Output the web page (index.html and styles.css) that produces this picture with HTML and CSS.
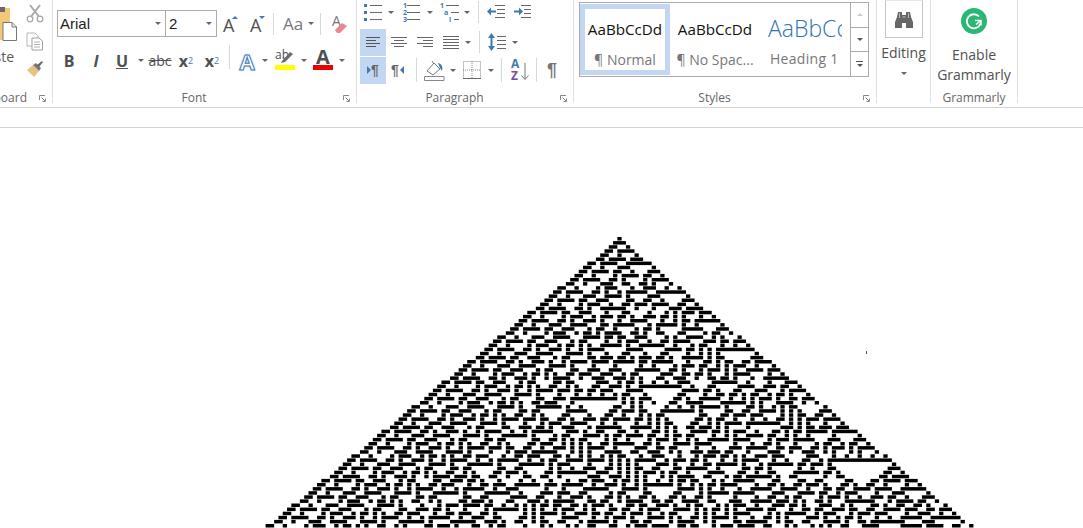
FILE: index.html
```html
<!DOCTYPE html>
<html lang="en">
<head>
<meta charset="utf-8">
<title>Document - Word</title>
<link rel="stylesheet" href="styles.css">
</head>
<body>
<div class="ribbon">
  <section class="group g-clip">
    <div class="body clip-body">
      <div class="paste">
        <svg class="paste-icon" width="18" height="42" viewBox="0 0 18 42"><rect x="-4" y="8" width="14" height="32" fill="#f0c878"/><rect x="-2" y="7" width="7" height="5" fill="#6a6a6a"/><path d="M3 22.5h9l4.500 4.500v13.500h-13.500z" fill="#fff" stroke="#777"/><path d="M12 22.500v4.500h4.500" fill="none" stroke="#777"/></svg>
        <span class="paste-text">Paste</span>
      </div>
      <div class="clip-tools">
        <svg width="18" height="19" viewBox="0 0 18 19"><path d="M4 1l8.500 11M14 1l-8.500 11" stroke="#a9a9a9" stroke-width="2" fill="none"/><circle cx="4" cy="15" r="2.800" fill="none" stroke="#a9a9a9" stroke-width="1.300"/><circle cx="14" cy="15" r="2.800" fill="none" stroke="#a9a9a9" stroke-width="1.300"/></svg>
        <svg width="18" height="19" viewBox="0 0 18 19"><path d="M1 1h8l3 3v10h-11z" fill="#fff" stroke="#b5b5b5"/><path d="M6 6h7l3.500 3v9h-10.500z" fill="#fff" stroke="#a0a0a0"/><path d="M8 10h6M8 12.500h6M8 15h6" stroke="#b0b0b0"/></svg>
        <svg width="18" height="18" viewBox="0 0 18 18"><path d="M1 10l6-5 6 6-5 6z" fill="#e9c283"/><path d="M7 5l3-2 5 5-2 3z" fill="#777"/><path d="M11 5l5-4 1 1-4 5z" fill="#666"/></svg>
      </div>
    </div>
    <div class="label label-clip"><span class="label-text">Clipboard</span><svg class="launcher" width="7" height="7" viewBox="0 0 7 7"><path d="M.5 5V.5H6M2.500 2.500L6 6M3.500 6.500H6.500V3.500" fill="none" stroke="#888"/></svg></div>
  </section>

  <section class="group g-font">
    <div class="body font-body">
      <div class="row font-row1">
        <div class="select sel-font"><span>Arial</span><i class="caret"></i></div>
        <div class="select sel-size"><span>2</span><i class="caret"></i></div>
        <div class="tbtn b-grow"><span class="big-a">A</span><svg width="6" height="4" class="tick" viewBox="0 0 6 4"><path d="M0 4l3-3 3 3z" fill="#3f78b5"/></svg></div>
        <div class="tbtn b-shrink"><span class="big-a">A</span><svg width="6" height="4" class="tick" viewBox="0 0 6 4"><path d="M0 1l3 3 3-3z" fill="#3f78b5"/></svg></div>
        <i class="sep sep-tall"></i>
        <div class="tbtn b-case"><span class="aa">Aa</span><i class="caret c-case"></i></div>
        <i class="sep sep-tall"></i>
        <div class="tbtn b-erase"><span class="erase-a">A</span><svg class="erase-svg" width="14" height="12" viewBox="0 0 14 12"><path d="M1 8l7-7 5 3-7 7H3z" fill="#ea8593"/></svg></div>
      </div>
      <div class="row font-row2">
        <div class="tbtn b-b">B</div>
        <div class="tbtn b-i">I</div>
        <div class="tbtn b-u">U</div><i class="caret c-u"></i>
        <div class="tbtn b-abc">abc</div>
        <div class="tbtn b-sub">x<sub>2</sub></div>
        <div class="tbtn b-sup">x<sup>2</sup></div>
        <i class="sep sep-r2"></i>
        <div class="tbtn b-glow">A</div><i class="caret c-glow"></i>
        <div class="tbtn b-hl"><span class="ab">ab</span><svg class="pen" width="14" height="14" viewBox="0 0 14 14"><path d="M2 11l8-9 3 2-8 8-4 1z" fill="#6a6a6a"/></svg><i class="bar bar-y"></i></div><i class="caret c-hl"></i>
        <div class="tbtn b-col"><span class="col-a">A</span><i class="bar bar-r"></i></div><i class="caret c-col"></i>
      </div>
    </div>
    <div class="label"><span class="label-text">Font</span><svg class="launcher" width="7" height="7" viewBox="0 0 7 7"><path d="M.5 5V.5H6M2.500 2.500L6 6M3.500 6.500H6.500V3.500" fill="none" stroke="#888"/></svg></div>
  </section>

  <section class="group g-para">
    <div class="body para-body">
      <div class="row para-row para-row1">
        <svg width="21" height="22" viewBox="0 0 21 22"><g fill="#3f78b5"><rect x="1" y="3" width="3" height="3"/><rect x="1" y="10" width="3" height="3"/><rect x="1" y="17" width="3" height="3"/></g><path d="M7 4.500h12M7 11.500h12M7 18.500h12" stroke="#666"/></svg>
        <i class="caret c-p1"></i>
        <svg class="i-num" width="20" height="22" viewBox="0 0 20 22"><g class="num"><text x="1" y="7">1</text><text x="1" y="14">2</text><text x="1" y="21">3</text></g><path d="M5 4.500h13M5 11.500h13M5 18.500h13" stroke="#666"/></svg>
        <i class="caret c-p2"></i>
        <svg class="i-ml" width="20" height="22" viewBox="0 0 20 22"><g class="num"><text x="0" y="7">1</text><text x="4" y="14">a</text><text x="9" y="21">i</text></g><path d="M6 4.500h13M11 11.500h8M14 18.500h5" stroke="#666"/></svg>
        <i class="caret c-p3"></i>
        <i class="sep sep-p1"></i>
        <svg class="i-dec" width="19" height="22" viewBox="0 0 19 22"><path d="M8 4.500h10M10 8.500h8M10 12.500h8M8 16.500h10" stroke="#666"/><path d="M0 10.500l4-4v3h5v2H4v3z" fill="#3f78b5"/></svg>
        <svg class="i-inc" width="19" height="22" viewBox="0 0 19 22"><path d="M8 4.500h10M11 8.500h7M11 12.500h7M8 16.500h10" stroke="#666"/><path d="M10 10.500l-4-4v3H1v2h5v3z" fill="#3f78b5"/></svg>
      </div>
      <div class="row para-row para-row2">
        <div class="pbtn on"><svg width="14" height="11" viewBox="0 0 14 11"><path d="M0 .5h14M0 3.500h10M0 6.500h14M0 9.500h10" stroke="#555"/></svg></div>
        <svg class="i-al" width="16" height="11" viewBox="0 0 16 11"><path d="M0 .5h16M3 3.500h10M0 6.500h16M3 9.500h10" stroke="#666"/></svg>
        <svg class="i-al" width="16" height="11" viewBox="0 0 16 11"><path d="M0 .5h16M6 3.500h10M0 6.500h16M6 9.500h10" stroke="#666"/></svg>
        <svg class="i-al" width="16" height="13" viewBox="0 0 16 13"><path d="M0 .5h16M0 3.500h16M0 6.500h16M0 9.500h16M0 12.500h16" stroke="#666"/></svg>
        <i class="caret c-p4"></i>
        <i class="sep sep-p2"></i>
        <svg class="i-ls" width="18" height="18" viewBox="0 0 18 18"><path d="M3.500 0L7 5H4.500v8H7l-3.500 5L0 13h2.500V5H0z" fill="#3f78b5"/><path d="M9 3.500h9M9 7.500h9M9 11.500h9M9 15.500h9" stroke="#666"/></svg>
        <i class="caret c-p5"></i>
      </div>
      <div class="row para-row para-row3">
        <div class="pbtn on pil"><svg width="4" height="8" viewBox="0 0 4 8"><path d="M0 0l4 4-4 4z" fill="#3f78b5"/></svg><span>¶</span></div>
        <div class="pil pil-r"><span>¶</span><svg width="5" height="8" viewBox="0 0 5 8"><path d="M5 0L1 4l4 4z" fill="#3f78b5"/></svg></div>
        <i class="sep sep-p3"></i>
        <svg class="i-shade" width="21" height="21" viewBox="0 0 21 21"><path d="M3 11l7-8 6 6-7 6z" fill="#fff" stroke="#777"/><path d="M8 1l2 3" stroke="#777"/><path d="M14 3c4 1 5 4 4 8l-2-3z" fill="#3f78b5"/><path d="M.5 16.500h19.500v4H.5z" fill="#fff" stroke="#888"/></svg>
        <i class="caret c-p6"></i>
        <svg class="i-bord" width="18" height="18" viewBox="0 0 18 18"><rect x=".5" y=".5" width="17" height="17" fill="none" stroke="#888" stroke-dasharray="1 1"/><path d="M9 0v18M0 9h18" stroke="#888" stroke-dasharray="1 1"/><path d="M0 17.500h18" stroke="#666"/></svg>
        <i class="caret c-p7"></i>
        <i class="sep sep-p4"></i>
        <div class="sort"><span class="sort-a">A</span><span class="sort-z">Z</span><svg class="sort-arrow" width="8" height="18" viewBox="0 0 8 18"><path d="M4 0v16M.5 12.500L4 16.500l3.500-4" fill="none" stroke="#777"/></svg></div>
        <i class="sep sep-p5"></i>
        <span class="pilcrow">¶</span>
      </div>
    </div>
    <div class="label"><span class="label-text">Paragraph</span><svg class="launcher" width="7" height="7" viewBox="0 0 7 7"><path d="M.5 5V.5H6M2.500 2.500L6 6M3.500 6.500H6.500V3.500" fill="none" stroke="#888"/></svg></div>
  </section>

  <section class="group g-styles">
    <div class="body styles-body">
      <div class="gallery">
        <div class="style-item selected"><span class="sample">AaBbCcDd</span><span class="style-name">¶ Normal</span></div>
        <div class="style-item"><span class="sample">AaBbCcDd</span><span class="style-name">¶ No Spac...</span></div>
        <div class="style-item heading"><span class="sample-h">AaBbCcDd</span><span class="style-name">Heading 1</span></div>
        <div class="scroller">
          <div class="sc"><i class="caret up"></i></div>
          <div class="sc"><i class="caret dark"></i></div>
          <div class="sc more"><b></b><i class="caret dark"></i></div>
        </div>
      </div>
    </div>
    <div class="label"><span class="label-text">Styles</span><svg class="launcher" width="7" height="7" viewBox="0 0 7 7"><path d="M.5 5V.5H6M2.500 2.500L6 6M3.500 6.500H6.500V3.500" fill="none" stroke="#888"/></svg></div>
  </section>

  <section class="group g-edit">
    <div class="edit-box"><svg width="18" height="17" viewBox="0 0 18 17"><path d="M3 1h4v3h4V1h4l1 5 2 5v6h-7v-5H7v5H0v-6l2-5z" fill="#666"/><path d="M4.500 2v5M13.500 2v5M7.500 6h3" stroke="#bbb"/></svg></div>
    <span class="big-label">Editing</span>
    <i class="caret c-edit"></i>
  </section>

  <section class="group g-gram">
    <div class="body gram-body">
      <svg class="g-logo" width="26" height="26" viewBox="0 0 26 26"><circle cx="13" cy="13" r="13" fill="#2bb673"/><path d="M18 8.500A7 7 0 1 0 19.500 15.500" fill="none" stroke="#fff" stroke-width="1.800"/><path d="M14 12.500h6v5M20 12.500l-5 4" fill="none" stroke="#fff" stroke-width="1.500"/></svg>
      <span class="big-label">Enable<br>Grammarly</span>
    </div>
    <div class="label label-gram"><span class="label-text">Grammarly</span></div>
  </section>
</div>
<div class="strip"></div>
<main class="doc"><canvas id="automaton" width="1083" height="400"></canvas></main>
<script src="script.js"></script>
</body>
</html>
```
FILE: styles.css
```css
* { box-sizing: border-box; }
html, body { margin: 0; height: 528px; overflow: hidden; background: #fff; }
body { font-family: "Open Sans", "Noto Sans", sans-serif; color: #5b5b5b; }
i { display: block; font-style: normal; flex: none; }
svg { display: block; flex: none; }

.ribbon { display: flex; height: 108px; padding-bottom: 5px; border-bottom: 1px solid #d4d4d4; overflow: hidden; }
.strip { height: 20px; border-bottom: 1px solid #d4d4d4; }
.doc canvas { display: block; }

.group { display: flex; flex-direction: column; flex: none; height: 103px; border-right: 1px solid #e1e1e1; }
.g-clip { width: 53px; }
.g-font { width: 304px; }
.g-para { width: 217px; }
.g-styles { width: 303px; }
.g-edit { width: 54px; align-items: center; }
.g-gram { width: 87px; }
.body { height: 88px; flex: none; }
.label { height: 15px; display: flex; padding-right: 6px; align-items: flex-start; font-size: 12px; line-height: 19px; color: #666; }
.label-text { flex: 1; text-align: center; white-space: nowrap; }
.launcher { margin: 7px 0 0 8px; }
.label-clip { justify-content: flex-end; overflow: hidden; padding-right: 6px; }
.label-clip .label-text { flex: none; margin-right: 4px; }
.label-gram { padding-right: 0; }

.caret { width: 0; height: 0; border: 3.500px solid transparent; border-bottom: 0; border-top: 3.500px solid #666; }
.sep { width: 1px; background: #d8d8d8; }
.row { display: flex; align-items: center; }

/* clipboard */
.clip-body { display: flex; }
.paste { width: 26px; overflow: hidden; display: flex; flex-direction: column; }
.paste-text { align-self: flex-end; width: 14px; margin-right: 12px; direction: rtl; font-size: 14px; line-height: 20px; margin-top: 5px; white-space: nowrap; display: flex; justify-content: flex-start; }
.clip-tools { display: flex; flex-direction: column; gap: 9px; padding-top: 4px; }

/* font */
.font-body { padding: 10px 0 0 4px; }
.font-row1 { height: 27px; }
.select { height: 27px; border: 1px solid #ababab; display: flex; align-items: center; justify-content: space-between; padding: 0 4px 0 2px; color: #222; font: 15px/1 "Liberation Sans", Arial, sans-serif; }
.sel-font { width: 109px; }
.sel-size { width: 52px; margin-left: -1px; padding-left: 3px; }
.tbtn { display: flex; align-items: center; justify-content: center; flex: none; position: relative; color: #505050; }
.b-grow { width: 27px; margin-left: 6px; justify-content: flex-start; }
.b-shrink { width: 23px; justify-content: flex-start; }
.big-a { font-size: 18px; line-height: 22px; margin-top: 3px; }
.tick { margin: -13px 0 0 -2px; }
.sep-tall { height: 22px; }
.b-case { width: 46px; padding-left: 9px; gap: 5px; justify-content: flex-start; }
.aa { font-size: 17px; color: #777; line-height: 22px; }
.b-erase { width: 27px; height: 22px; justify-content: flex-start; padding-left: 11px; }
.erase-a { font-size: 14px; color: #777; margin-top: -7px; }
.erase-svg { margin: 8px 0 0 -7px; }

.font-row2 { height: 27px; margin-top: 10px; }
.font-row2 .tbtn { font-weight: 700; font-size: 16px; height: 27px; }
.b-b { width: 24px; }
.b-i { width: 30px; font-style: italic; }
.b-u { width: 22px; text-decoration: underline; }
.c-u { margin-left: 5px; }
.b-abc { width: 32px; font-weight: 400 !important; font-size: 14px !important; text-decoration: line-through; }
.b-sub { width: 20px; }
.b-sub sub { font-size: 9px; color: #3f78b5; font-weight: 400; line-height: 0; }
.b-sup { width: 32px; }
.b-sup sup { font-size: 9px; color: #3f78b5; font-weight: 400; line-height: 0; }
.sep-r2 { height: 24px; margin-left: 1px; margin-top: -8px; }
.b-glow { width: 30px; margin-left: 2px; color: #fff !important; font-size: 22px !important; -webkit-text-stroke: 1px #3f78b5; text-shadow: 0 0 3px #9cc3ea; }
.b-hl { width: 20px; margin-left: 7px; flex-direction: column; align-items: flex-start !important; justify-content: flex-start !important; padding-top: 2px; }
.font-row2 .b-hl { font-weight: 400; font-size: 12px; }
.ab { line-height: 12px; }
.pen { margin: -11px 0 0 5px; }
.bar { width: 20px; height: 5px; }
.bar-y { background: #ff0; margin-top: 1px; }
.bar-r { background: #e00; margin-top: -1px; }
.c-hl { margin-left: 6px; }
.b-col { width: 20px; margin-left: 6px; flex-direction: column; }
.font-row2 .b-col { justify-content: flex-start; padding-top: 1px; }
.col-a { font-size: 20px; line-height: 18px; }
.c-col { margin-left: 6px; }

/* paragraph */
.para-body { padding: 0 0 0 3px; display: flex; flex-direction: column; }
.para-row { height: 28px; }
.para-row1 { height: 27px; padding: 0 0 3px 3px; margin-bottom: 1px; }
.c-p1 { margin-left: 4px; }
.i-num { margin-left: 8px; }
.c-p2 { margin-left: 5px; }
.i-ml { margin-left: 7px; }
.c-p3 { margin-left: 4px; }
.num { font: 700 7px "Open Sans", sans-serif; fill: #3f78b5; }
.sep-p1 { height: 22px; margin-left: 8px; }
.i-dec { margin-left: 8px; }
.i-inc { margin-left: 7px; }
.pbtn { width: 26px; height: 27px; display: flex; align-items: center; justify-content: center; }
.on { background: #c3d7f2; }
.i-al { margin-left: 10px; }
.para-row2 .pbtn + .i-al { margin-left: 5px; }
.c-p4 { margin-left: 6px; }
.sep-p2 { height: 22px; margin-left: 8px; }
.i-ls { margin-left: 8px; }
.c-p5 { margin-left: 6px; }
.pil { display: flex; align-items: center; font: 700 14px/1 "Liberation Sans", sans-serif; color: #666; }
.pil-r { width: 18px; margin-left: 5px; }
.sep-p3 { height: 24px; margin-left: 7px; }
.i-shade { margin-left: 7px; }
.c-p6 { margin-left: 5px; }
.i-bord { margin-left: 7px; }
.c-p7 { margin-left: 7px; }
.sep-p4 { height: 24px; margin-left: 7px; }
.sort { width: 20px; height: 24px; margin-left: 9px; display: grid; grid-template-columns: 10px 8px; font: 700 12px/12px "Open Sans", sans-serif; }
.sort-a { grid-area: 1 / 1; color: #3f78b5; }
.sort-z { grid-area: 2 / 1; color: #7b4ba3; }
.sort-arrow { grid-area: 1 / 2 / 3 / 3; margin-top: 5px; }
.sep-p5 { height: 24px; margin-left: 5px; }
.pilcrow { margin-left: 10px; font: 700 18px/1 "Liberation Sans", sans-serif; color: #777; }

/* styles */
.styles-body { padding: 2px 0 0 5px; }
.gallery { width: 290px; height: 75px; border: 1px solid #ababab; display: flex; }
.style-item { width: 90px; height: 71px; margin-top: 1px; display: flex; flex-direction: column; align-items: center; flex: none; overflow: hidden; white-space: nowrap; border: 5px solid transparent; padding-top: 10px; }
.selected { border-color: #c3d7f2; }
.sample { font: 15.200px/20px "Open Sans", sans-serif; color: #111; }
.style-name { font-size: 14px; line-height: 20px; color: #777; margin-top: 11px; }
.heading { width: 87px; padding-top: 3px; align-items: flex-start; padding-left: 3px; }
.sample-h { font-size: 23px; font-weight: 300; line-height: 32px; color: #2e74b5; }
.heading .style-name { margin-top: 5px; padding-left: 2px; letter-spacing: 0.300px; }
.scroller { width: 18px; margin-left: auto; border-left: 1px solid #ababab; display: flex; flex-direction: column; flex: none; }
.sc { flex: 1; display: flex; flex-direction: column; align-items: center; justify-content: center; gap: 2px; }
.sc + .sc { border-top: 1px solid #ababab; }
.up { border-top: 0; border-bottom: 3.500px solid #ccc; }
.dark { border-top-color: #555; }
.sc b { display: block; width: 7px; height: 1px; background: #555; }

/* editing */
.edit-box { width: 38px; height: 38px; border: 1px solid #c6c6c6; border-top-color: #e8e8e8; display: flex; align-items: center; justify-content: center; }
.big-label { font-size: 14px; line-height: 20px; color: #505050; text-align: center; white-space: nowrap; }
.g-edit .big-label { margin-top: 5px; }
.c-edit { margin-top: 9px; }

/* grammarly */
.gram-body { display: flex; flex-direction: column; align-items: center; padding-top: 8px; }
.g-logo { margin-bottom: 11px; }
```
FILE: script.js
```js
// Rule 30 automaton. The picture keeps about five rows in six, each drawn as a bar.
(function () {
  var canvas = document.getElementById('automaton');
  var ctx = canvas.getContext('2d');
  var cellW = 4.29, trueH = 3.5, pitch = 4.1, barH = 3.5;
  var apexX = 619.5, apexY = 237 - 128;
  var rows = 90, n = rows * 2 + 3, mid = rows + 1;
  var cur = new Array(n).fill(0);
  cur[mid] = 1;
  var k = 0;
  ctx.fillStyle = '#000';
  for (var r = 0; r < rows; r++) {
    if (Math.floor(k * pitch / trueH) === r) {
      var start = -1;
      for (var i = 0; i <= n; i++) {
        var on = i < n && cur[i];
        if (on && start < 0) start = i;
        if (!on && start >= 0) {
          ctx.fillRect(apexX + (start - mid - 0.5) * cellW, apexY + k * pitch, (i - start) * cellW, barH);
          start = -1;
        }
      }
      k++;
    }
    var next = new Array(n).fill(0);
    for (var j = 1; j < n - 1; j++) next[j] = cur[j - 1] ^ (cur[j] | cur[j + 1]);
    cur = next;
  }
  ctx.fillStyle = '#555';
  ctx.fillRect(866, 351 - 128, 1, 3);
})();
```
